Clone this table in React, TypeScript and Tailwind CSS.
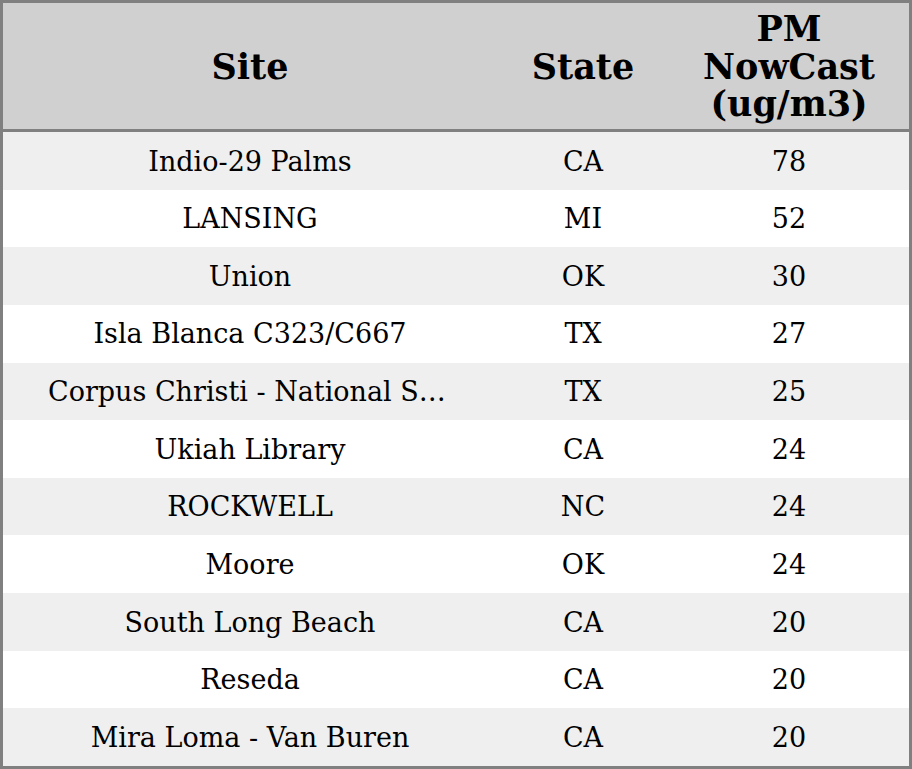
const ROWS = [
  { site: 'Indio-29 Palms', state: 'CA', pm: 78 },
  { site: 'LANSING', state: 'MI', pm: 52 },
  { site: 'Union', state: 'OK', pm: 30 },
  { site: 'Isla Blanca C323/C667', state: 'TX', pm: 27 },
  { site: 'Corpus Christi - National Seashore', state: 'TX', pm: 25 },
  { site: 'Ukiah Library', state: 'CA', pm: 24 },
  { site: 'ROCKWELL', state: 'NC', pm: 24 },
  { site: 'Moore', state: 'OK', pm: 24 },
  { site: 'South Long Beach', state: 'CA', pm: 20 },
  { site: 'Reseda', state: 'CA', pm: 20 },
  { site: 'Mira Loma - Van Buren', state: 'CA', pm: 20 },
]

export default function App() {
  return (
    <div className="w-[912px] h-[769px] flex flex-col border-[3px] border-[#808080] bg-white text-black font-['DejaVu_Serif',serif]">
      {/* header */}
      <div className="h-[125px] shrink-0 grid grid-cols-[494px_172px_240px] items-center bg-[#d0d0d0] border-b-[3px] border-[#808080] box-content text-[35px] leading-[37.5px] font-bold text-center pt-px">
        <div>Site</div>
        <div>State</div>
        <div>
          PM
          <br />
          NowCast
          <br />
          (ug/m3)
        </div>
      </div>

      {/* rows */}
      <div className="flex-1 flex flex-col">
        {ROWS.map((r, i) => (
          <div
            key={r.site}
            className={`flex-1 grid grid-cols-[494px_172px_240px] items-center text-center text-[27px] pt-[2px] ${
              i % 2 === 0 ? 'bg-[#efefef]' : 'bg-white'
            }`}
          >
            <div className="px-[45px] truncate" title={r.site}>{r.site}</div>
            <div>{r.state}</div>
            <div>{r.pm}</div>
          </div>
        ))}
      </div>
    </div>
  )
}
